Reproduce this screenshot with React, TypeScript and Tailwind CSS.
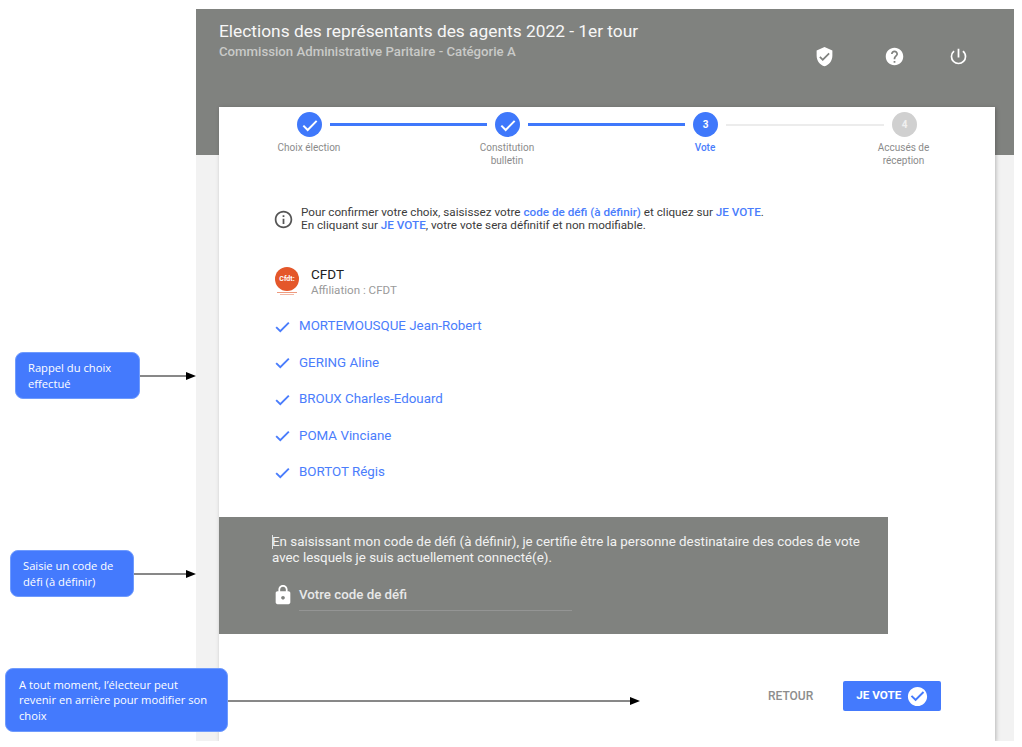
import { MdCheckCircle, MdHelp, MdInfoOutline, MdLock, MdPowerSettingsNew, MdVerifiedUser } from 'react-icons/md'

const STEPS = [
  { label: 'Choix élection', state: 'done' },
  { label: 'Constitution bulletin', state: 'done' },
  { label: 'Vote', state: 'current' },
  { label: 'Accusés de réception', state: 'todo' },
]

const CANDIDATES = ['MORTEMOUSQUE Jean-Robert', 'GERING Aline', 'BROUX Charles-Edouard', 'POMA Vinciane', 'BORTOT Régis']

function Check({ size }: { size: number }) {
  return (
    <svg width={size} height={size} viewBox="0 0 24 24" fill="none" stroke="currentColor" strokeWidth="2.4">
      <path d="M4 12.8L9.2 18L20 7" />
    </svg>
  )
}

function Stepper() {
  return (
    <div className="pt-[5px]">
      <div className="flex items-center pl-[78px]">
        {STEPS.map((step, i) => (
          <div key={step.label} className="flex items-center">
            {step.state === 'done' && (
              <div className="flex h-[25px] w-[25px] items-center justify-center rounded-full bg-[#3f78fb] text-white">
                <Check size={20} />
              </div>
            )}
            {step.state === 'current' && (
              <div className="flex h-[25px] w-[25px] items-center justify-center rounded-full bg-[#3f78fb] text-[10px] font-bold text-white">3</div>
            )}
            {step.state === 'todo' && (
              <div className="flex h-[25px] w-[25px] items-center justify-center rounded-full bg-[#d0d0d0] text-[10px] font-bold text-[#f0f0f0]">4</div>
            )}
            {i < 2 && <div className="mx-2 h-[3px] w-[157px] bg-[#3f78fb]" />}
            {i === 2 && <div className="mx-2 h-[2px] w-[158px] bg-[#ececec]" />}
          </div>
        ))}
      </div>
      <div className="-ml-[9px] mt-[5px] grid grid-cols-[198px_198px_198px_199px]">
        {STEPS.map((step) => (
          <div key={step.label} className={`mx-auto w-[64px] text-center text-[10px] leading-[12.5px] ${step.state === 'current' ? 'font-medium text-[#4a7dfc]' : 'text-[#8b8b8b]'}`}>
            {step.label}
          </div>
        ))}
      </div>
    </div>
  )
}

function Callout({ className, lines }: { className: string; lines: string[] }) {
  return (
    <div className={`absolute flex flex-col justify-center rounded-[8px] border border-[#6f9bfd] bg-[#447afd] font-['Open_Sans',sans-serif] text-[11.2px] leading-[15.5px] text-white ${className}`}>
      {lines.map((line) => (
        <div key={line}>{line}</div>
      ))}
    </div>
  )
}

function Arrows() {
  return (
    <svg className="pointer-events-none absolute left-0 top-0" width="1022" height="747">
      <path d="M140 376H187" stroke="#111" strokeWidth="1" />
      <path d="M186 372L196 376L186 380Z" fill="#000" />
      <path d="M134 574H187" stroke="#111" strokeWidth="1" />
      <path d="M186 570L196 574L186 578Z" fill="#000" />
      <path d="M228 701H631" stroke="#111" strokeWidth="1" />
      <path d="M630 697L640 701L630 705Z" fill="#000" />
    </svg>
  )
}

export default function App() {
  return (
    <div className="relative h-[747px] w-[1022px] overflow-hidden bg-white font-['Roboto',sans-serif]">
      {/* fenêtre de vote */}
      <div className="ml-[196px] h-[741px] w-[818px] overflow-hidden pt-[9px]">
        <div className="h-full bg-[#f2f2f2]">
          <header className="flex h-[146px] justify-between bg-[#80827f] pl-[23px] text-white">
            <div className="pt-[11px]">
              <h1 className="text-[17.33px] leading-[22px] text-[#f7f7f7]">Elections des représentants des agents 2022 - 1er tour</h1>
              <p className="mt-[1px] text-[13.2px] font-medium leading-[18px] text-[#c9cac8]">Commission Administrative Paritaire - Catégorie A</p>
            </div>
            <div className="flex h-fit items-center pr-[45px] pt-[37px]">
              <MdVerifiedUser size={21} />
              <MdHelp size={21} className="ml-[49px]" />
              <MdPowerSettingsNew size={21} className="ml-[43px]" />
            </div>
          </header>

          <main className="relative ml-[23px] -mt-[48px] h-[634px] w-[776px] bg-white shadow-[1px_1px_4px_rgba(0,0,0,0.25)]">
            <Stepper />

            <section className="ml-[54px] mt-[39px] flex items-center gap-[7px] text-[11.7px] leading-[13px] text-[#3c3c3c]">
              <MdInfoOutline size={21} className="text-[#555]" />
              <p>
                Pour confirmer votre choix, saisissez votre <b className="font-medium text-[#4a7dfc]">code de défi (à définir)</b> et cliquez sur <b className="font-medium text-[#4a7dfc]">JE VOTE</b>.
                <br />
                En cliquant sur <b className="font-medium text-[#4a7dfc]">JE VOTE</b>, votre vote sera définitif et non modifiable.
              </p>
            </section>

            <section className="ml-[56px] mt-[34px] flex items-start gap-[12px]">
              <div className="flex w-[24px] flex-col items-center pt-px">
                <div className="flex h-[24px] w-[24px] items-center justify-center rounded-full bg-[#e4572a] text-[7px] font-bold text-white">Cfdt:</div>
                <div className="mt-[1px] h-px w-[20px] bg-[#ee9a7e]" />
                <div className="mt-px h-px w-[14px] bg-[#f3b8a4]" />
              </div>
              <div>
                <div className="text-[13.5px] leading-[17px] text-[#222]">CFDT</div>
                <div className="text-[11.6px] leading-[15px] text-[#9a9a9a]">Affiliation : CFDT</div>
              </div>
            </section>

            <ul className="ml-[54px] mt-[18px] flex flex-col gap-[16.5px]">
              {CANDIDATES.map((name) => (
                <li key={name} className="flex h-[20px] items-center gap-[7px] text-[13.35px] text-[#4a7dfc]">
                  <Check size={19} />
                  {name}
                </li>
              ))}
            </ul>

            <section className="mt-[35px] h-[117px] w-[669px] bg-[#80827f] pl-[53px] pt-[17px] text-[13.35px] leading-[16px] text-[#f2f2f2]">
              <p className="w-[600px]">
                <span className="-mr-px inline-block h-[14px] w-px bg-[#e0e0e0] align-middle" />
                En saisissant mon code de défi (à définir), je certifie être la personne destinataire des codes de vote avec lesquels je suis actuellement connecté(e).
              </p>
              <div className="mt-[12px] flex items-center gap-[5px]">
                <MdLock size={22} className="text-white" />
                <div className="h-[33px] w-[273px] border-b border-[#949594] pt-[8px] text-[13.3px] font-medium leading-[17px] text-[#e8e8e8]">Votre code de défi</div>
              </div>
            </section>

            <div className="ml-[549px] mt-[47px] flex items-center gap-[30px]">
              <span className="text-[12px] font-medium text-[#8d8d8d]">RETOUR</span>
              <button className="flex h-[30px] w-[98px] items-center gap-[5px] rounded-[2px] bg-[#447afd] pl-[13px] text-[11.7px] font-bold text-white">
                JE VOTE
                <MdCheckCircle size={23} />
              </button>
            </div>
          </main>
        </div>
      </div>

      {/* annotations */}
      <Callout className="left-[15px] top-[352px] h-[47px] w-[125px] pl-[12px]" lines={['Rappel du choix', 'effectué']} />
      <Callout className="left-[10px] top-[550px] h-[47px] w-[124px] pl-[12px]" lines={['Saisie un code de', 'défi (à définir)']} />
      <Callout className="left-[5px] top-[668px] h-[64px] w-[223px] pl-[13px]" lines={['A tout moment, l’électeur peut', 'revenir en arrière pour modifier son', 'choix']} />
      <Arrows />
    </div>
  )
}
